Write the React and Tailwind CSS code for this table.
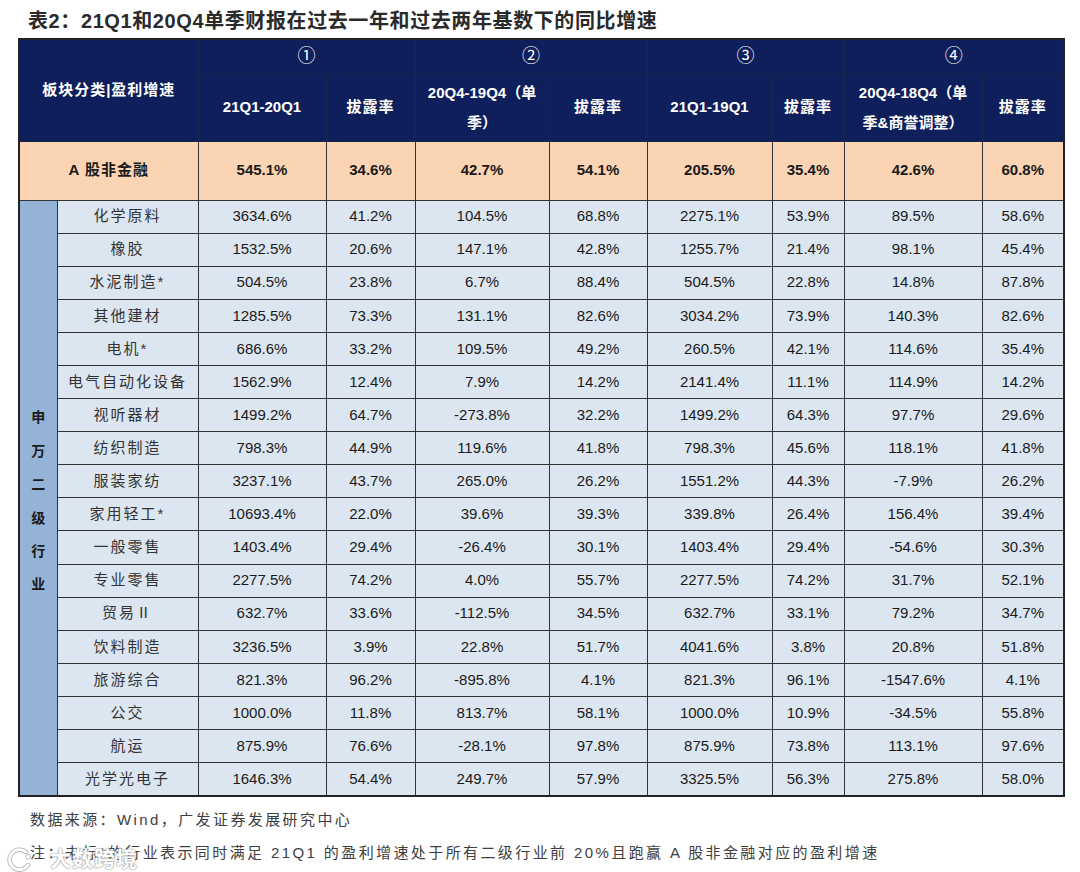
import React from "react";

const rows = [
  ["化学原料","3634.6%","41.2%","104.5%","68.8%","2275.1%","53.9%","89.5%","58.6%"],
  ["橡胶","1532.5%","20.6%","147.1%","42.8%","1255.7%","21.4%","98.1%","45.4%"],
  ["水泥制造*","504.5%","23.8%","6.7%","88.4%","504.5%","22.8%","14.8%","87.8%"],
  ["其他建材","1285.5%","73.3%","131.1%","82.6%","3034.2%","73.9%","140.3%","82.6%"],
  ["电机*","686.6%","33.2%","109.5%","49.2%","260.5%","42.1%","114.6%","35.4%"],
  ["电气自动化设备","1562.9%","12.4%","7.9%","14.2%","2141.4%","11.1%","114.9%","14.2%"],
  ["视听器材","1499.2%","64.7%","-273.8%","32.2%","1499.2%","64.3%","97.7%","29.6%"],
  ["纺织制造","798.3%","44.9%","119.6%","41.8%","798.3%","45.6%","118.1%","41.8%"],
  ["服装家纺","3237.1%","43.7%","265.0%","26.2%","1551.2%","44.3%","-7.9%","26.2%"],
  ["家用轻工*","10693.4%","22.0%","39.6%","39.3%","339.8%","26.4%","156.4%","39.4%"],
  ["一般零售","1403.4%","29.4%","-26.4%","30.1%","1403.4%","29.4%","-54.6%","30.3%"],
  ["专业零售","2277.5%","74.2%","4.0%","55.7%","2277.5%","74.2%","31.7%","52.1%"],
  ["贸易Ⅱ","632.7%","33.6%","-112.5%","34.5%","632.7%","33.1%","79.2%","34.7%"],
  ["饮料制造","3236.5%","3.9%","22.8%","51.7%","4041.6%","3.8%","20.8%","51.8%"],
  ["旅游综合","821.3%","96.2%","-895.8%","4.1%","821.3%","96.1%","-1547.6%","4.1%"],
  ["公交","1000.0%","11.8%","813.7%","58.1%","1000.0%","10.9%","-34.5%","55.8%"],
  ["航运","875.9%","76.6%","-28.1%","97.8%","875.9%","73.8%","113.1%","97.6%"],
  ["光学光电子","1646.3%","54.4%","249.7%","57.9%","3325.5%","56.3%","275.8%","58.0%"],
];

const top = ["545.1%","34.6%","42.7%","54.1%","205.5%","35.4%","42.6%","60.8%"];

const hd = "border border-[#1b2546] bg-[#0e1f5b] text-white font-bold text-[15px] text-center align-middle";

export default function App() {
  return (
    <div className="relative w-[1080px] h-[872px] bg-white overflow-hidden font-['Liberation_Sans','Noto_Sans_CJK_SC',sans-serif] text-[#1a1a1a]">
      <div className="pl-[28px] pt-[7px] h-[38px] text-[20px] leading-[28px] font-bold text-[#2a2a2a] tracking-[0.6px]">
        表2：21Q1和20Q4单季财报在过去一年和过去两年基数下的同比增速
      </div>
      <div className="pl-[18px]">
        <table className="table-fixed border-collapse w-[1045px] border-2 border-[#222]">
          <colgroup>
            <col className="w-[38px]" />
            <col className="w-[141px]" />
            <col className="w-[128px]" />
            <col className="w-[89px]" />
            <col className="w-[134px]" />
            <col className="w-[98px]" />
            <col className="w-[125px]" />
            <col className="w-[72px]" />
            <col className="w-[138px]" />
            <col className="w-[82px]" />
          </colgroup>
          <thead>
            <tr className="h-[35px]">
              <th colSpan={2} rowSpan={2} className={hd + " tracking-[1px]"}>板块分类|盈利增速</th>
              <th colSpan={2} className={hd + " text-[18px] font-normal"}>①</th>
              <th colSpan={2} className={hd + " text-[18px] font-normal"}>②</th>
              <th colSpan={2} className={hd + " text-[18px] font-normal"}>③</th>
              <th colSpan={2} className={hd + " text-[18px] font-normal"}>④</th>
            </tr>
            <tr className="h-[67px]">
              <th className={hd}>21Q1-20Q1</th>
              <th className={hd + " tracking-[1px]"}>拔露率</th>
              <th className={hd + " leading-[30px]"}>20Q4-19Q4（单<br />季）</th>
              <th className={hd + " tracking-[1px]"}>拔露率</th>
              <th className={hd}>21Q1-19Q1</th>
              <th className={hd + " tracking-[1px]"}>拔露率</th>
              <th className={hd + " leading-[30px]"}>20Q4-18Q4（单<br />季&amp;商誉调整）</th>
              <th className={hd + " tracking-[1px]"}>拔露率</th>
            </tr>
          </thead>
          <tbody>
            <tr className="h-[59px] bg-[#fbd4b4]">
              <td colSpan={2} className="border border-[#333] text-center font-bold text-[15px] tracking-[1px]">A 股非金融</td>
              {top.map((v, i) => (
                <td key={i} className="border border-[#333] text-center font-bold text-[15px]">{v}</td>
              ))}
            </tr>
            {rows.map((r, ri) => (
              <tr key={ri} className="h-[33.1px] bg-[#dce6f1]">
                {ri === 0 && (
                  <td rowSpan={rows.length} className="border border-[#333] bg-[#95b3d7] text-center align-middle">
                    <div className="flex flex-col items-center font-bold text-[14px] leading-[33.4px] text-[#1a1a1a] pt-[8px]">
                      {"申万二级行业".split("").map((c, k) => (
                        <span key={k}>{c}</span>
                      ))}
                    </div>
                  </td>
                )}
                <td className="border border-[#333] text-center text-[15px] tracking-[2px] text-[#333]">{r[0]}</td>
                {r.slice(1).map((v, i) => (
                  <td key={i} className="border border-[#333] text-center text-[15px]">{v}</td>
                ))}
              </tr>
            ))}
          </tbody>
        </table>
      </div>
      <div className="pl-[30px] pt-[6px] text-[15px] leading-[33px] text-[#404040] tracking-[2.4px]">
        <div>数据来源：Wind，广发证券发展研究中心</div>
        <div>注：未标*的行业表示同时满足 21Q1 的盈利增速处于所有二级行业前 20%且跑赢 A 股非金融对应的盈利增速</div>
      </div>
      <div className="absolute left-[6px] top-[843px] flex items-center gap-[16px]">
        <svg width="28" height="26" viewBox="0 0 28 26" fill="none">
          <path d="M20 6 A10 10 0 1 0 22 19" stroke="#b5b5b5" strokeWidth="4.5" strokeLinecap="round" />
          <path d="M20 6 A10 10 0 1 0 22 19" stroke="#ffffff" strokeWidth="2.8" strokeLinecap="round" />
          <circle cx="22" cy="11" r="2.4" fill="#ffffff" stroke="#b5b5b5" strokeWidth="0.9" />
        </svg>
        <span className="text-[21px] font-bold text-white tracking-[1px] [text-shadow:0_0_1px_#8a8a8a,0_0_2px_#8a8a8a]">大数跨境</span>
      </div>
    </div>
  );
}
